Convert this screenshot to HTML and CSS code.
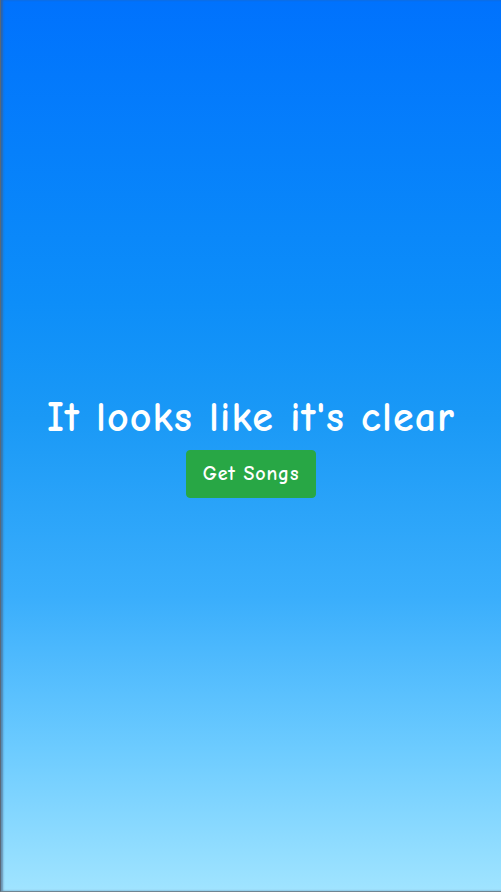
FILE: index.html
```html
<!DOCTYPE html>
<html lang="en">
<head>
<meta charset="utf-8">
<title>Weather Songs</title>
<link rel="stylesheet" href="styles.css">
</head>
<body>
<main class="sky">
  <div class="content">
    <h1 class="title">It looks like it's clear</h1>
    <button class="btn-songs" type="button">Get Songs</button>
  </div>
</main>
</body>
</html>
```
FILE: styles.css
```css
html, body {
  margin: 0;
  padding: 0;
  height: 100%;
}
body {
  font-family: "Comic Sans MS", "Comic Neue", "Chalkboard SE", "DejaVu Sans", sans-serif;
  color: #fff;
}
.sky {
  box-sizing: border-box;
  height: 100vh;
  display: flex;
  align-items: center;
  justify-content: center;
  background: linear-gradient(180deg, #0072fd 0%, #0680fb 17%, #0d8ef9 34%, #1a99f6 47%, #3aaefc 67%, #6ccbff 84%, #a0e4ff 100%);
  border-left: 1px solid #5a6878;
  border-bottom: 1px solid #6f8592;
  box-shadow: inset 2px 0 2px rgba(70, 90, 120, 0.6);
}
.content {
  display: flex;
  flex-direction: column;
  align-items: center;
  text-align: center;
}
.title {
  margin: 0 0 8px;
  font-size: 42px;
  font-weight: 700;
  letter-spacing: 1.1px;
  line-height: 48px;
}
.btn-songs {
  font-family: inherit;
  font-size: 20px;
  font-weight: 700;
  letter-spacing: 0.8px;
  line-height: 30px;
  padding: 8px 16px;
  color: #fff;
  background: #28a745;
  border: 1px solid #28a745;
  border-radius: 4px;
}
```
